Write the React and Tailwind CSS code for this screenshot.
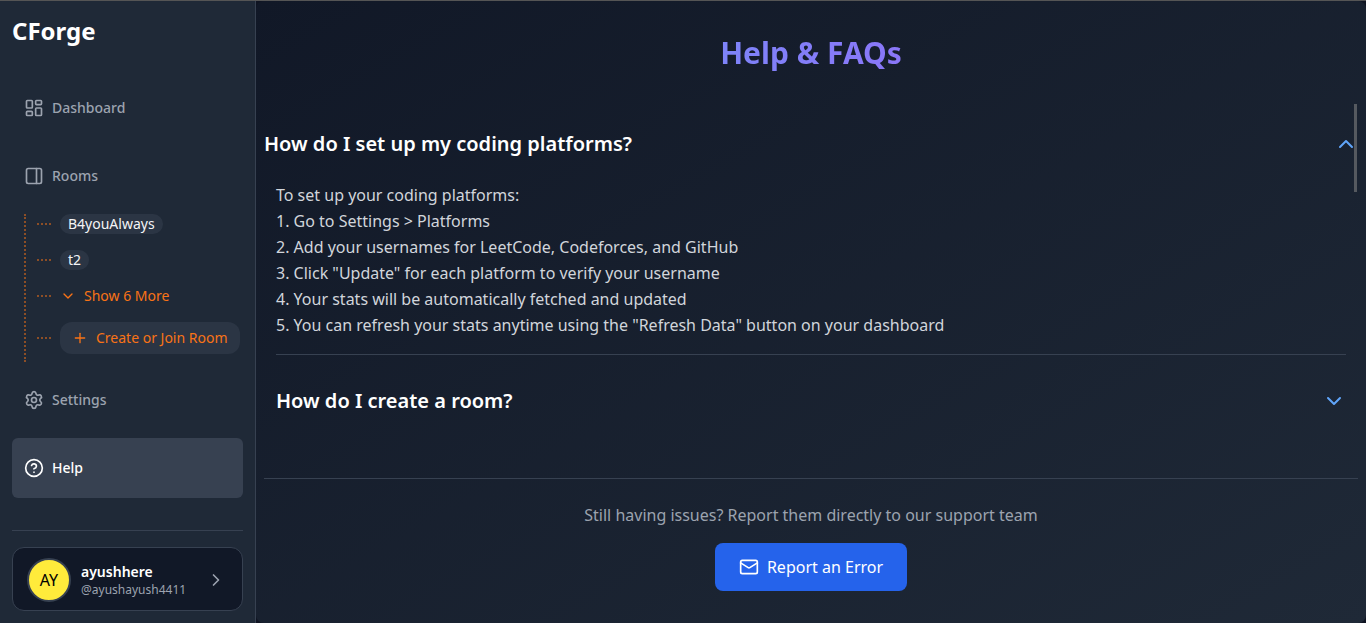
import { useState } from "react";
import {
  ChevronDown,
  ChevronRight,
  ChevronUp,
  CircleHelp,
  LayoutDashboard,
  Mail,
  PanelRight,
  Plus,
  Settings,
} from "lucide-react";

const FAQS = [
  {
    question: "How do I set up my coding platforms?",
    answer: [
      "To set up your coding platforms:",
      "1. Go to Settings > Platforms",
      "2. Add your usernames for LeetCode, Codeforces, and GitHub",
      '3. Click "Update" for each platform to verify your username',
      "4. Your stats will be automatically fetched and updated",
      '5. You can refresh your stats anytime using the "Refresh Data" button on your dashboard',
    ],
  },
  { question: "How do I create a room?", answer: [] },
];

function NavItem({ icon: Icon, label, active }) {
  return (
    <a
      href="#"
      aria-current={active ? "page" : undefined}
      className={
        active
          ? "flex h-15 items-center gap-2 rounded-md bg-[#374151] px-3 text-sm font-medium text-white"
          : "flex h-15 items-center gap-2 rounded-md px-3 text-sm font-medium text-[#9ca3af]"
      }
    >
      <Icon size={20} />
      {label}
    </a>
  );
}

function Branch({ children }) {
  return (
    <li className="flex items-center gap-[9px]">
      <span className="w-3.5 border-t-2 border-dotted border-[#f97316]/50" />
      {children}
    </li>
  );
}

function Sidebar() {
  return (
    <aside className="flex w-64 shrink-0 flex-col border-r border-[#374151] bg-[#1f2937] px-3 pb-3">
      <div className="pt-3.5 text-2xl leading-8 font-bold text-white">CForge</div>
      <nav className="mt-[31px] flex flex-col gap-2">
        <NavItem icon={LayoutDashboard} label="Dashboard" />
        <div>
          <NavItem icon={PanelRight} label="Rooms" />
          <ul className="mt-2 ml-3 flex flex-col gap-4 border-l-2 border-dotted border-[#f97316]/50 pb-2 pl-[11px] text-sm">
            <Branch>
              <a href="#" className="rounded-full bg-[#374151]/50 px-2 leading-5 text-[#f3f4f6]">
                B4youAlways
              </a>
            </Branch>
            <Branch>
              <a href="#" className="rounded-full bg-[#374151]/50 px-2 leading-5 text-[#f3f4f6]">
                t2
              </a>
            </Branch>
            <Branch>
              <button type="button" className="flex items-center gap-2 leading-5 text-[#f97316]">
                <ChevronDown size={16} />
                Show 6 More
              </button>
            </Branch>
            <Branch>
              <button
                type="button"
                className="flex h-8 items-center gap-2 rounded-xl bg-[#374151]/50 px-3 whitespace-nowrap text-[#f97316]"
              >
                <Plus size={16} />
                Create or Join Room
              </button>
            </Branch>
          </ul>
        </div>
        <NavItem icon={Settings} label="Settings" />
        <NavItem icon={CircleHelp} label="Help" active />
      </nav>
      <div className="mt-auto border-t border-[#374151] pt-4">
        <button
          type="button"
          className="flex h-16 w-full items-center gap-2.5 rounded-xl border border-[#374151] bg-[#111827] px-3.5 pt-0.5 text-left"
        >
          <span className="flex size-11 shrink-0 items-center justify-center rounded-full border-2 border-[#374151] bg-[#ffeb3b] text-base text-black">
            AY
          </span>
          <span className="flex flex-1 flex-col">
            <span className="text-sm leading-5 font-semibold text-white">ayushhere</span>
            <span className="text-xs leading-4 text-[#9ca3af]">@ayushayush4411</span>
          </span>
          <ChevronRight size={20} className="mr-0.5 text-[#9ca3af]" />
        </button>
      </div>
    </aside>
  );
}

function FaqItem({ faq, open, onToggle }) {
  return (
    <section className={open ? "pt-5" : "px-3 pt-8"}>
      <h2>
        <button
          type="button"
          aria-expanded={open}
          onClick={onToggle}
          className={
            open
              ? "flex w-full items-center justify-between text-left text-xl leading-10 font-semibold text-white"
              : "flex w-full items-center justify-between text-left text-xl leading-7 font-semibold text-white"
          }
        >
          {faq.question}
          {open ? (
            <ChevronUp size={24} className="text-[#60a5fa]" />
          ) : (
            <ChevronDown size={24} className="text-[#60a5fa]" />
          )}
        </button>
      </h2>
      {open && (
        <div className="mx-3 border-b border-[#374151] pt-4.5 pb-4 leading-6.5 text-[#d1d5db]">
          {faq.answer.map((line) => (
            <p key={line}>{line}</p>
          ))}
        </div>
      )}
    </section>
  );
}

export default function App() {
  const [openIndex, setOpenIndex] = useState(0);
  return (
    <div className="flex h-screen border-t border-[#555555] bg-[#0f1422] font-['Noto_Sans',sans-serif]">
      <Sidebar />
      <main className="flex min-w-0 flex-1 flex-col rounded-lg bg-linear-to-br/srgb from-[#111827] to-[#1f2937] px-2 pt-8">
        <h1 className="bg-linear-to-r/srgb from-[#60a5fa] to-[#a855f7] bg-clip-text text-center text-3xl leading-10 font-bold text-transparent">
          Help &amp; FAQs
        </h1>
        <div className="relative mt-[31px] min-h-0 flex-1">
          <div className="h-full overflow-hidden">
            {FAQS.map((faq, i) => (
              <FaqItem
                key={faq.question}
                faq={faq}
                open={openIndex === i}
                onToggle={() => setOpenIndex(openIndex === i ? -1 : i)}
              />
            ))}
          </div>
          <div className="absolute top-0 right-px h-22 w-[3px] bg-[#55595f]" />
        </div>
        <footer className="flex flex-col items-center gap-4 border-t border-[#374151] pt-6 pb-8">
          <p className="text-base text-[#9ca3af]">
            Still having issues? Report them directly to our support team
          </p>
          <button
            type="button"
            className="flex h-12 items-center gap-2 rounded-lg bg-[#2563eb] px-6 text-base text-white"
          >
            <Mail size={20} />
            Report an Error
          </button>
        </footer>
      </main>
    </div>
  );
}
